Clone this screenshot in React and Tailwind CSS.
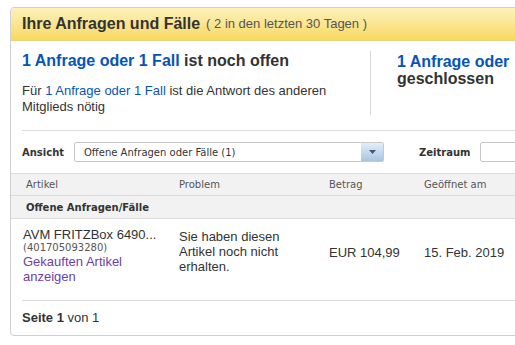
export default function App() {
  const blue = "text-[#0654ba]";
  return (
    <div className="w-[515px] h-[345px] overflow-hidden bg-white font-['Liberation_Sans',Arial,sans-serif] text-[#333]">
      <div className="ml-[10px] mt-[7px] w-[620px] h-[329px] border border-[#cfcfcf] rounded-[4px] flex flex-col">
        {/* header */}
        <div className="h-[33px] shrink-0 rounded-t-[4px] bg-gradient-to-b from-[#fdf1bb] to-[#f8d95e] border-b border-[#ead27a] flex items-center pl-[11px]">
          <span className="text-[16px] font-bold text-[#333]">Ihre Anfragen und Fälle</span>
          <span className="text-[13px] text-[#555] ml-[6px]">( 2 in den letzten 30 Tagen )</span>
        </div>
        {/* summary */}
        <div className="flex pt-[10px] pl-[11px]">
          <div className="w-[349px] shrink-0 border-r border-[#d6d6d6]">
            <div className="text-[16px] font-bold leading-[20px]">
              <span className={blue}>1 Anfrage oder 1 Fall</span> ist noch offen
            </div>
            <div className="mt-[12px] text-[13px] leading-[16px] text-[#333]">
              Für <span className={blue}>1 Anfrage oder 1 Fall</span> ist die Antwort des anderen
              <br />
              Mitglieds nötig
            </div>
          </div>
          <div className="pl-[26px] text-[16px] font-bold leading-[17px] pt-[2px]">
            <div className={blue}>1 Anfrage oder</div>
            <div>geschlossen</div>
          </div>
        </div>
        <div className="ml-[11px] mt-[15px] border-t border-[#dcdcdc]"></div>
        {/* filter */}
        <div className="flex items-center pl-[11px] mt-[11px] h-[20px] font-['DejaVu_Sans',Verdana,sans-serif] text-[10px]">
          <span className="font-bold text-[#333] w-[52px]">Ansicht</span>
          <div className="w-[310px] h-[20px] border border-[#c8c8c8] rounded-[2px] flex items-center bg-white">
            <span className="pl-[9px] flex-1 text-[#333]">Offene Anfragen oder Fälle (1)</span>
            <div className="w-[22px] h-[18px] bg-gradient-to-b from-[#e3eef8] to-[#a9c6e1] flex items-center justify-center">
              <svg width="7" height="4" viewBox="0 0 7 4"><path d="M0 0h7L3.5 4z" fill="#3d5a78" /></svg>
            </div>
          </div>
          <span className="font-bold text-[#333] ml-[35px] w-[61px]">Zeitraum</span>
          <div className="w-[120px] h-[20px] border border-[#c8c8c8] rounded-[2px] bg-white"></div>
        </div>
        {/* table header */}
        <div className="mt-[11px] font-['DejaVu_Sans',Verdana,sans-serif] text-[10px]">
          <div className="h-[23px] bg-[#f2f2f2] border-t border-b border-[#dcdcdc] flex items-center text-[#555]">
            <span className="pl-[15px] w-[168px]">Artikel</span>
            <span className="w-[150px]">Problem</span>
            <span className="w-[95px]">Betrag</span>
            <span>Geöffnet am</span>
          </div>
          <div className="h-[23px] bg-[#f2f2f2] border-b border-[#dcdcdc] flex items-center pl-[15px] font-bold text-[#333]">
            Offene Anfragen/Fälle
          </div>
        </div>
        {/* row */}
        <div className="flex text-[13px] leading-[15px] text-[#333] h-[81px]">
          <div className="w-[157px] pl-[12px] pt-[8px]">
            <div>AVM FRITZBox 6490...</div>
            <div className="leading-[12px] text-[#555] font-['DejaVu_Sans',Verdana,sans-serif] text-[10px]">(401705093280)</div>
            <div className="text-[#6b3fa8] leading-[15px]">Gekauften Artikel<br />anzeigen</div>
          </div>
          <div className="w-[161px] pl-[11px] pt-[10px] leading-[15px]">
            Sie haben diesen<br />Artikel noch nicht<br />erhalten.
          </div>
          <div className="w-[95px] pt-[26px]">EUR 104,99</div>
          <div className="pt-[26px]">15. Feb. 2019</div>
        </div>
        <div className="ml-[11px] border-t border-[#dcdcdc]"></div>
        <div className="pl-[11px] pt-[9px] text-[13px] leading-[16px] text-[#333]">
          <span className="font-bold">Seite 1</span> von 1
        </div>
      </div>
    </div>
  );
}
